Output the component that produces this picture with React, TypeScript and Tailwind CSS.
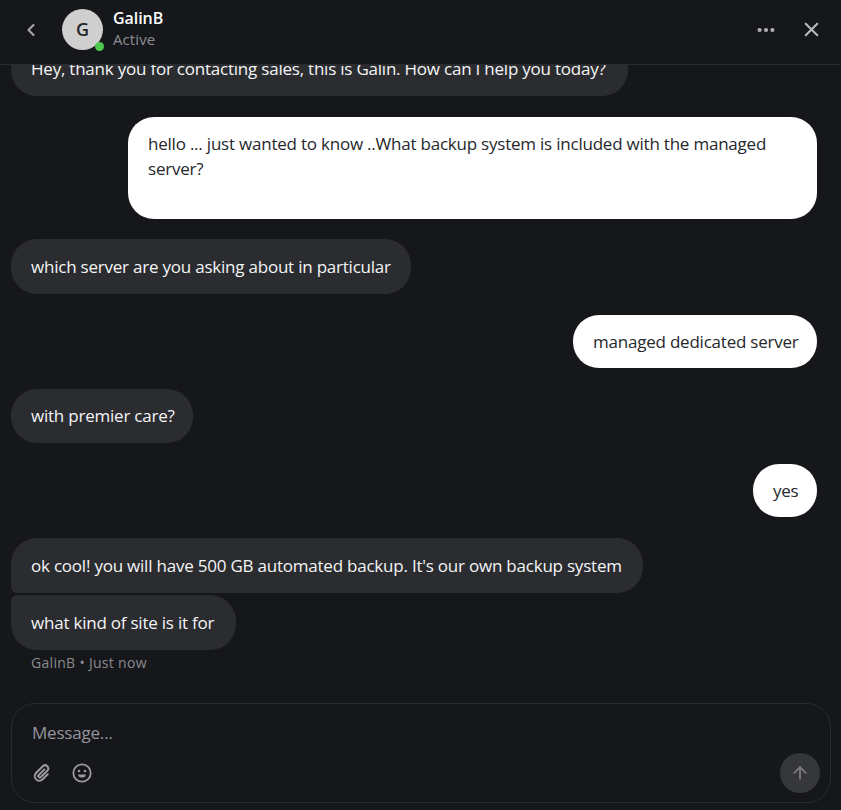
import React from "react";
import { ChevronLeft, Ellipsis, X, ArrowUp } from "lucide-react";

const font = "font-['Open_Sans','Noto_Sans',sans-serif]";

function Incoming({ children, className = "" }: { children: React.ReactNode; className?: string }) {
  return (
    <div className={`self-start flex items-center px-5 whitespace-nowrap bg-[#2b2c30] text-[#f4f5f6] text-[17px] tracking-[-0.22px] ${className}`}>
      {children}
    </div>
  );
}

function Outgoing({ children, className = "" }: { children: React.ReactNode; className?: string }) {
  return (
    <div className={`self-end h-[53px] flex items-center px-5 whitespace-nowrap bg-white text-[#26272b] text-[17px] tracking-[-0.22px] rounded-[26px] ${className}`}>
      {children}
    </div>
  );
}

function ClipIcon() {
  return (
    <svg width="20" height="20" viewBox="0 0 20 20" fill="none" stroke="currentColor" strokeWidth="2" strokeLinecap="round" className="text-[#9a9b9e]">
      <path d="M12.4 6.4 6.6 12.2a1.5 1.5 0 0 0 2.1 2.1l6.8-6.8a3.2 3.2 0 0 0-4.5-4.5L4 10a4.6 4.6 0 0 0 6.5 6.5l5.2-5.2" />
    </svg>
  );
}

function SmileIcon() {
  return (
    <svg width="20" height="20" viewBox="0 0 20 20" fill="none" className="text-[#9a9b9e]">
      <circle cx="10" cy="10" r="8.7" stroke="currentColor" strokeWidth="1.8" />
      <circle cx="7" cy="8" r="1.3" fill="currentColor" />
      <circle cx="13" cy="8" r="1.3" fill="currentColor" />
      <path d="M6 11.4a4.1 4.1 0 0 0 8 0Z" fill="currentColor" />
    </svg>
  );
}

export default function App() {
  return (
    <div className={`w-[841px] h-[810px] bg-[#16171b] flex flex-col overflow-hidden ${font}`}>
      {/* Header */}
      <header className="h-[65px] shrink-0 flex items-center pl-[21px] pr-[18px] pb-[5px] border-b border-[#2a2b2f] bg-[#16171b] z-10">
        <ChevronLeft size={20} strokeWidth={2.5} className="text-[#a9aaad]" />
        <div className="relative ml-[21px] w-[41px] h-[41px] rounded-full bg-[#cfcfcf] flex items-center justify-center text-[#26272b] text-[18px] font-semibold">
          G
          <span className="absolute right-[-1px] bottom-[-1px] w-[9px] h-[9px] rounded-full bg-[#4fc94f]" />
        </div>
        <div className="ml-[10px] mb-1 flex flex-col">
          <span className="text-[16px] leading-[22px] font-semibold tracking-[-0.05px] text-white">GalinB</span>
          <span className="text-[15px] leading-[20px] tracking-[0.1px] text-[#8b8d91]">Active</span>
        </div>
        <div className="ml-auto flex items-center gap-[23px]">
          <Ellipsis size={22} strokeWidth={2.6} className="text-[#b3b4b6]" />
          <X size={23} strokeWidth={2.2} className="text-[#b9babc]" />
        </div>
      </header>

      {/* Messages */}
      <main className="flex-1 min-h-0 flex flex-col pl-[11px] pr-[24px]">
        <Incoming className="h-[55px] mt-[-24px] w-[617px] rounded-[26px]">
          Hey, thank you for contacting sales, this is Galin. How can I help you today?
        </Incoming>
        <div className="self-end mt-[21px] w-[689px] h-[102px] pt-[14px] px-5 bg-white text-[#26272b] text-[17px] leading-[25px] tracking-[-0.22px] rounded-[26px]">
          hello ... just wanted to know ..What backup system is included with the managed server?
        </div>
        <Incoming className="h-[55px] mt-[20px] w-[400px] rounded-[26px]">
          which server are you asking about in particular
        </Incoming>
        <Outgoing className="mt-[21px] w-[244px]">managed dedicated server</Outgoing>
        <Incoming className="h-[54px] mt-[21px] w-[182px] rounded-[26px]">with premier care?</Incoming>
        <Outgoing className="mt-[21px] w-[64px]">yes</Outgoing>
        <Incoming className="h-[55px] mt-[21px] w-[632px] rounded-[26px] rounded-bl-[6px]">
          ok cool! you will have 500 GB automated backup. It's our own backup system
        </Incoming>
        <Incoming className="h-[55px] mt-[2px] w-[225px] rounded-[26px] rounded-tl-[6px]">what kind of site is it for</Incoming>
        <div className="mt-[1px] ml-5 h-[22px] flex items-center text-[14px] tracking-[0.3px] text-[#8a8b8f]">
          GalinB • Just now
        </div>
      </main>

      {/* Composer */}
      <div className="shrink-0 ml-[11px] mr-[10px] mb-[7px] h-[100px] rounded-[24px] border border-[#2a2b2f] pl-5 pr-[10px] pt-[17px] pb-[9px] flex flex-col">
        <div className="text-[17px] leading-[24px] tracking-[-0.2px] text-[#94959a]">Message...</div>
        <div className="mt-auto flex items-center justify-between">
          <div className="flex items-center gap-[20px]">
            <ClipIcon />
            <SmileIcon />
          </div>
          <button type="button" className="w-10 h-10 rounded-full bg-[#36373b] flex items-center justify-center text-[#7f8084]">
            <ArrowUp size={20} strokeWidth={2} />
          </button>
        </div>
      </div>
    </div>
  );
}
